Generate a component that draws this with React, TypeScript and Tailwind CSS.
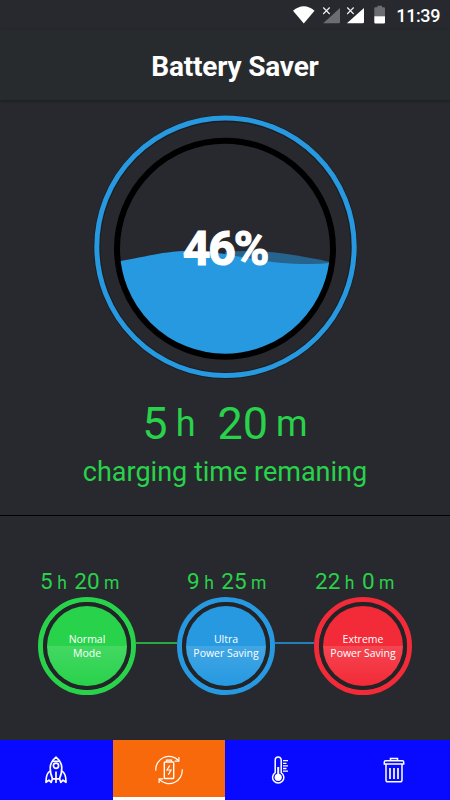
import type { ReactNode } from "react";
import clsx from "clsx";

const modes = [
  {
    id: "normal",
    label: ["Normal", "Mode"],
    hours: 5,
    minutes: 20,
    color: "#28d24b",
  },
  {
    id: "ultra",
    label: ["Ultra", "Power Saving"],
    hours: 9,
    minutes: 25,
    color: "#2699e1",
  },
  {
    id: "extreme",
    label: ["Extreme", "Power Saving"],
    hours: 22,
    minutes: 0,
    color: "#f32a37",
  },
];

const StatusBar = () => (
  <div className="flex h-[30px] items-center justify-end pr-[10px] text-white">
    <svg width="94" height="20" viewBox="0 0 94 20" className="mr-[10px]">
      {/* wifi */}
      <path
        d="M1 5.7C4.5 2.9 8 1.3 11.8 1.3S19.1 2.9 22.5 5.7L11.8 18.6Z"
        fill="#fff"
      />
      {/* sim 1, no signal */}
      <path d="M48 3v14q0 1.3-1.3 1.3H31.2Z" fill="#6c6d71" />
      <path d="M31 2.5l6.5 6.5M37.5 2.5l-6.5 6.5" stroke="#28292e" strokeWidth="4" />
      <path d="M31.2 2.5l6.5 6.5M37.7 2.5l-6.5 6.5" stroke="#eee" strokeWidth="1.2" />
      {/* sim 2 */}
      <path d="M72 3v14q0 1.3-1.3 1.3H54.9Z" fill="#fff" />
      <path d="M55 2.5l6.5 6.5M61.5 2.5l-6.5 6.5" stroke="#28292e" strokeWidth="4" />
      <path d="M55.2 2.5l6.5 6.5M61.7 2.5l-6.5 6.5" stroke="#eee" strokeWidth="1.2" />
      {/* battery */}
      <path d="M82.3 11.4V3.5q0-1.3 1.3-1.3h1.8V.7h4.6v1.5h1.7q1.3 0 1.3 1.3v7.9Z" fill="#6c6d71" />
      <path d="M82.3 11.2H93v6.2q0 1.1-1.1 1.1h-8.5q-1.1 0-1.1-1.1Z" fill="#fff" />
    </svg>
    <span className="pt-[2px] text-[18px] leading-none font-medium tracking-[-0.4px]">11:39</span>
  </div>
);

const Gauge = ({ percent }: { percent: number }) => (
  <div className="relative mx-auto h-[264px] w-[264px]">
    <svg width="264" height="264" viewBox="93 115 264 264">
      <circle cx="225.5" cy="247" r="128.5" fill="none" stroke="#1d1e22" strokeWidth="7" />
      <circle cx="225.5" cy="246.8" r="128.7" fill="none" stroke="#2699e1" strokeWidth="5" />
      <clipPath id="tank">
        <circle cx="225" cy="248.7" r="106" />
      </clipPath>
      <g clipPath="url(#tank)">
        <path d="M225 252C255 249 285 252 335 263V270H225Z" fill="#26638d" />
        <path
          d="M115 262C150 256 164 251 190 251C230 251 255 264 310 264Q325 264 336 262V360H115Z"
          fill="#2699e1"
        />
      </g>
      <circle cx="225" cy="248.7" r="108" fill="none" stroke="#000" strokeWidth="6" />
    </svg>
    <div className="absolute inset-0 flex items-center justify-center pt-[4px] text-[48px] font-bold tracking-[-2px] text-white [-webkit-text-stroke:1.2px_white]">
      {percent}%
    </div>
  </div>
);

const ModeTime = ({ hours, minutes }: { hours: number; minutes: number }) => (
  <div className="flex items-baseline text-[22.5px] leading-[23px] text-[#28d24b]">
    <span>{hours}</span>
    <span className="ml-[4.5px] text-[17.5px]">h</span>
    <span className="ml-[7.5px]">{minutes}</span>
    <span className="ml-[4.5px] text-[17.5px]">m</span>
  </div>
);

const ModeDial = ({ color, label }: { color: string; label: string[] }) => (
  <div
    className="flex h-[98px] w-[98px] items-center justify-center rounded-full border-[5px]"
    style={{ borderColor: color }}
  >
    <div className="flex h-[88px] w-[88px] shrink-0 items-center justify-center rounded-full bg-[#222427]">
      <div
        className="relative flex h-[80px] w-[80px] shrink-0 flex-col items-center justify-center overflow-hidden rounded-full font-['Open_Sans','Noto_Sans',sans-serif] text-[10.5px] leading-[14px] whitespace-nowrap text-white"
        style={{ backgroundColor: color }}
      >
        <div className="absolute inset-x-0 bottom-0 h-[40px] bg-linear-to-b from-white/13 to-transparent" />
        {label.map((line) => (
          <span key={line} className="relative">
            {line}
          </span>
        ))}
      </div>
    </div>
  </div>
);

const RocketIcon = () => (
  <svg width="22" height="28" viewBox="0 0 22 28" fill="none" stroke="#fff" strokeWidth="1.7" strokeLinejoin="round">
    <path d="M11 1.2C7.5 4 5.2 7.5 5.2 12c0 4.5 1 8 2.3 10.8h7C15.8 20 16.8 16.5 16.8 12c0-4.500-2.300-8-5.800-10.800Z" />
    <path d="M7.7 5.3h6.6" />
    <circle cx="11" cy="9.7" r="2.6" />
    <path d="M5.2 15C2 17 1 19.5 1 26.3l3-2.2 2.2 2.2 1.3-3.5M16.8 15c3.2 2 4.2 4.5 4.2 11.3l-3-2.2-2.2 2.2-1.3-3.5M11 15.5V27" />
  </svg>
);

const ChargeIcon = () => (
  <svg width="30" height="30" viewBox="0 0 30 30" fill="none" stroke="#fff" strokeWidth="1.2">
    <path d="M1.8 15.8A13.2 13.2 0 0 1 24.7 5.7M28.2 14.2A13.2 13.2 0 0 1 5.3 24.3" />
    <path d="M24.9 2v4.2h-4.2M5.1 28v-4.2h4.2" />
    <path d="M12.5 7V5.2h5V7" />
    <rect x="10.3" y="7" width="9.4" height="16.5" rx="0.8" strokeWidth="1.4" />
    <path d="M15.8 10.5L13 15h4l-2.7 4.8" />
  </svg>
);

const ThermometerIcon = () => (
  <svg width="20" height="28" viewBox="0 0 20 28" fill="none" stroke="#fff" strokeWidth="1.5">
    <path d="M4.2 16.6V4a3 3 0 0 1 6 0v12.6a5.6 5.6 0 1 1-6 0Z" />
    <circle cx="7.2" cy="21.3" r="3.6" fill="#fff" stroke="none" />
    <path d="M7.2 11v9" strokeWidth="2" />
    <path d="M12 4.7h5M12 7.3h3.5M12 9.9h5M12 12.5h3.5M12 15.1h5" strokeWidth="1.3" />
  </svg>
);

const TrashIcon = () => (
  <svg width="22" height="26" viewBox="0 0 22 26" fill="none" stroke="#fff" strokeWidth="1.5">
    <path d="M7.5 3.5V1.4h7v2.1" />
    <path d="M1.3 7V5q0-1.3 1.3-1.3h16.8q1.3 0 1.3 1.3v2Z" />
    <path d="M3 7v16q0 1.8 1.8 1.8h12.4q1.8 0 1.8-1.8V7" />
    <path d="M7 11v11M11 11v11M15 11v11" strokeWidth="1.7" />
  </svg>
);

const tabs: { id: string; icon: ReactNode; label: string }[] = [
  { id: "boost", icon: <RocketIcon />, label: "Boost" },
  { id: "battery", icon: <ChargeIcon />, label: "Battery" },
  { id: "cooler", icon: <ThermometerIcon />, label: "Cooler" },
  { id: "junk", icon: <TrashIcon />, label: "Junk" },
];

const App = () => {
  const active = "battery";

  return (
    <div className="flex h-[800px] w-[450px] flex-col overflow-hidden bg-[#28292e] font-[Roboto,sans-serif]">
      <StatusBar />
      <header className="flex h-[70px] items-center justify-center bg-[#282b2e] pt-[3px] pl-[20px] shadow-[0_1px_3px_rgba(0,0,0,0.35)]">
        <h1 className="text-[28px] leading-none font-bold tracking-[-0.2px] text-white">Battery Saver</h1>
      </header>

      {/* Charge level */}
      <section className="flex h-[416px] flex-col items-center border-b border-black pt-[15px] text-[#28d24b]">
        <Gauge percent={46} />
        <div className="mt-[21px] flex h-[48px] items-baseline text-[45px] leading-[48px]">
          <span>5</span>
          <span className="relative -top-[3px] ml-[8px] text-[36px]">h</span>
          <span className="ml-[22px]">20</span>
          <span className="relative -top-[3px] ml-[8px] text-[36px]">m</span>
        </div>
        <p className="mt-[8px] text-[27px] leading-[32px]">charging time remaning</p>
      </section>

      {/* Power modes */}
      <section className="flex flex-1 flex-col pt-[54px]">
        <div className="flex h-[27px] pl-[40px]">
          {modes.map((mode) => (
            <div key={mode.id} className={clsx(mode.id === "normal" ? "w-[147px]" : "w-[128px]", "shrink-0")}>
              <ModeTime hours={mode.hours} minutes={mode.minutes} />
            </div>
          ))}
        </div>
        <div className="flex items-center pl-[38px]">
          <ModeDial color={modes[0].color} label={modes[0].label} />
          <div className="mb-[6px] h-[2px] w-[41px] bg-[#27a843]" />
          <ModeDial color={modes[1].color} label={modes[1].label} />
          <div className="mb-[6px] h-[2px] w-[39px] bg-[#237fb9]" />
          <ModeDial color={modes[2].color} label={modes[2].label} />
        </div>
      </section>

      <nav className="grid h-[60px] grid-cols-4 bg-[#080aff]">
        {tabs.map((tab) => (
          <button
            key={tab.id}
            aria-label={tab.label}
            className={clsx(
              "flex items-center justify-center border-b-[3px] pt-[2px]",
              tab.id === active ? "border-white bg-[#f8690b]" : "border-transparent"
            )}
          >
            {tab.icon}
          </button>
        ))}
      </nav>
    </div>
  );
};

export default App;
